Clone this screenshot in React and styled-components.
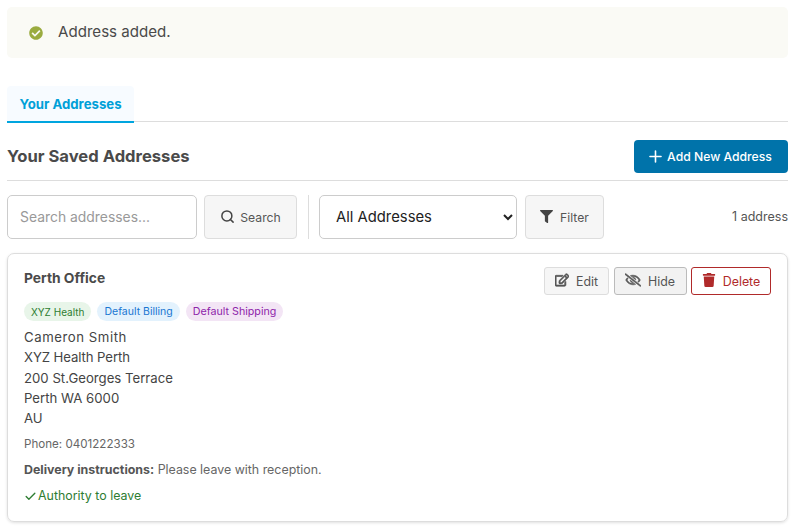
import React from "react";
import styled, { createGlobalStyle } from "styled-components";
import { FaCheckCircle, FaFilter, FaRegEdit, FaRegEyeSlash, FaTrash } from "react-icons/fa";
import { Check, Plus, Search } from "lucide-react";

const Global = createGlobalStyle`
  html, body { margin: 0; padding: 0; background: #fff; }
  body { font-family: Inter, "Liberation Sans", sans-serif; color: #444; overflow: hidden; }
  * { box-sizing: border-box; }
`;

const Page = styled.div`
  width: 795px;
  height: 531px;
  padding: 7px 7px 0;
  overflow: hidden;
`;

const Notice = styled.div`
  height: 51px;
  background: #fafaf5;
  border-radius: 5px;
  display: flex;
  align-items: center;
  padding: 0 0 2px 22px;
  gap: 15px;
  font-size: 15.1px;
  color: #4a4a4a;
  svg { color: #9aab3f; width: 14px; height: 14px; margin-top: 2px; }
`;

const Tabs = styled.div`
  margin-top: 28px;
  height: 36px;
  border-bottom: 1px solid #ddd;
  display: flex;
`;

const Tab = styled.div`
  width: 127px;
  height: 37px;
  background: #f7fbff;
  border-bottom: 2px solid #00a5df;
  border-radius: 4px 4px 0 0;
  color: #00a0d8;
  font-size: 13.2px;
  font-weight: 700;
  display: flex;
  align-items: center;
  justify-content: center;
`;

const Header = styled.div`
  height: 59px;
  border-bottom: 1px solid #ddd;
  display: flex;
  align-items: center;
  justify-content: space-between;
  padding: 18px 0 7px;
`;

const Title = styled.h2`
  margin: 0 0 1px;
  font-size: 16.6px;
  font-weight: 700;
  color: #4a4a4a;
`;

const AddButton = styled.button`
  width: 154px;
  height: 33px;
  border: none;
  border-radius: 4px;
  background: #0073aa;
  color: #fff;
  font: 500 12.2px Inter, sans-serif;
  display: flex;
  align-items: center;
  justify-content: center;
  gap: 2px;
  padding: 0 8px 0 4px;
  svg { width: 19px; height: 19px; }
`;

const Controls = styled.div`
  margin-top: 14px;
  display: flex;
  align-items: center;
  height: 44px;
`;

const SearchInput = styled.input`
  width: 190px;
  height: 44px;
  border: 1px solid #ccc;
  border-radius: 5px;
  padding: 0 12px;
  font: 400 13.9px Inter, sans-serif;
  background: #fff;
  &::placeholder { color: #999; }
`;

const GreyButton = styled.button`
  width: ${(p) => p.$w}px;
  height: 44px;
  margin-left: ${(p) => p.$ml}px;
  border: 1px solid #ddd;
  border-radius: 4px;
  background: #f6f6f6;
  color: #555;
  font: 400 12.2px Inter, sans-serif;
  display: flex;
  align-items: center;
  justify-content: center;
  gap: ${(p) => p.$gap}px;
  svg { width: ${(p) => p.$icon}px; height: ${(p) => p.$icon}px; color: #444; margin-top: -2px; }
`;

const Divider = styled.div`
  width: 1px;
  height: 44px;
  background: #ddd;
  margin: 0 10px 0 11px;
`;

const FilterSelect = styled.select`
  width: 198px;
  height: 44px;
  border: 1px solid #ccc;
  border-radius: 5px;
  background: #fff;
  color: #222;
  padding: 0 12px;
  font: 400 14.8px Inter, sans-serif;
`;

const Count = styled.div`
  margin-left: auto;
  font-size: 12.5px;
  color: #555;
  margin-bottom: 1px;
`;

const Card = styled.div`
  margin-top: 14px;
  height: 269px;
  border: 1px solid #ddd;
  border-radius: 7px;
  box-shadow: 0 1px 3px rgba(0,0,0,.12);
  padding: 16px 16px 0;
`;

const CardTop = styled.div`
  display: flex;
  justify-content: space-between;
  align-items: flex-start;
`;

const CardName = styled.div`
  font-size: 13.8px;
  font-weight: 700;
  color: #4a4a4a;
`;

const Actions = styled.div`
  display: flex;
  gap: 4.5px;
  margin-top: -3px;
`;

const ActionButton = styled.button`
  height: 28px;
  width: ${(p) => p.$w}px;
  border: 1px solid ${(p) => p.$border};
  border-radius: 3px;
  background: ${(p) => p.$bg};
  color: ${(p) => p.$color};
  font: 400 12.4px Inter, sans-serif;
  display: flex;
  align-items: center;
  justify-content: center;
  gap: 7px;
  svg {
    width: ${(p) => p.$icon}px;
    height: ${(p) => p.$icon}px;
    margin-top: -2px;
    stroke: currentColor;
    stroke-width: ${(p) => p.$weight || 0};
  }
`;

const Badges = styled.div`
  display: flex;
  gap: 6px;
  margin-top: 7px;
`;

const Badge = styled.span`
  height: 19px;
  padding: 0 7px;
  border-radius: 10px;
  background: ${(p) => p.$bg};
  color: ${(p) => p.$color};
  font-size: ${(p) => p.$size}px;
  display: flex;
  align-items: center;
`;

const Address = styled.div`
  margin-top: 6px;
  font-size: 13.2px;
  line-height: 20.3px;
  color: #444;
`;

const AddressLine = styled.div`
  letter-spacing: ${(p) => p.$track || 0}px;
`;

const Phone = styled.div`
  margin-top: 8px;
  font-size: 11.6px;
  line-height: 16px;
  color: #666;
`;

const Instructions = styled.div`
  margin-top: 10px;
  font-size: 12.4px;
  line-height: 16px;
  color: #666;
  b { color: #555; }
`;

const Leave = styled.div`
  margin-top: 10px;
  font-size: 12.4px;
  line-height: 16px;
  color: #2e7d32;
  display: flex;
  align-items: center;
  gap: 1px;
  svg { width: 13px; height: 13px; }
`;

export default function App() {
  return (
    <Page>
      <Global />
      <Notice><FaCheckCircle />Address added.</Notice>
      <Tabs><Tab>Your Addresses</Tab></Tabs>
      <Header>
        <Title>Your Saved Addresses</Title>
        <AddButton><Plus strokeWidth={2} />Add New Address</AddButton>
      </Header>
      <Controls>
        <SearchInput placeholder="Search addresses..." />
        <GreyButton $w={93} $ml={7} $icon={15} $gap={5}><Search strokeWidth={2.4} />Search</GreyButton>
        <Divider />
        <FilterSelect defaultValue="all"><option value="all">All Addresses</option></FilterSelect>
        <GreyButton $w={79} $ml={8} $icon={13} $gap={7}><FaFilter />Filter</GreyButton>
        <Count>1 address</Count>
      </Controls>
      <Card>
        <CardTop>
          <CardName>Perth Office</CardName>
          <Actions>
            <ActionButton $w={65} $icon={14} $weight={28} $border="#ddd" $bg="#f6f6f6" $color="#555"><FaRegEdit />Edit</ActionButton>
            <ActionButton $w={73} $icon={16} $weight={24} $border="#bbb" $bg="#f2f2f2" $color="#555"><FaRegEyeSlash />Hide</ActionButton>
            <ActionButton $w={80} $icon={14} $border="#b02a2a" $bg="#fff" $color="#b02a2a"><FaTrash />Delete</ActionButton>
          </Actions>
        </CardTop>
        <Badges>
          <Badge $size={10} $bg="#e8f5e9" $color="#2e7d32">XYZ Health</Badge>
          <Badge $size={10.5} $bg="#e3f2fd" $color="#1976d2">Default Billing</Badge>
          <Badge $size={10.7} $bg="#f3e5f5" $color="#8e24aa">Default Shipping</Badge>
        </Badges>
        <Address>
          <AddressLine $track={0.55}>Cameron Smith</AddressLine>
          <AddressLine $track={-0.1}>XYZ Health Perth</AddressLine>
          <AddressLine>200 St.Georges Terrace</AddressLine>
          <AddressLine>Perth WA 6000</AddressLine>
          <AddressLine>AU</AddressLine>
        </Address>
        <Phone>Phone: 0401222333</Phone>
        <Instructions><b>Delivery instructions:</b> Please leave with reception.</Instructions>
        <Leave><Check strokeWidth={2.5} />Authority to leave</Leave>
      </Card>
    </Page>
  );
}
